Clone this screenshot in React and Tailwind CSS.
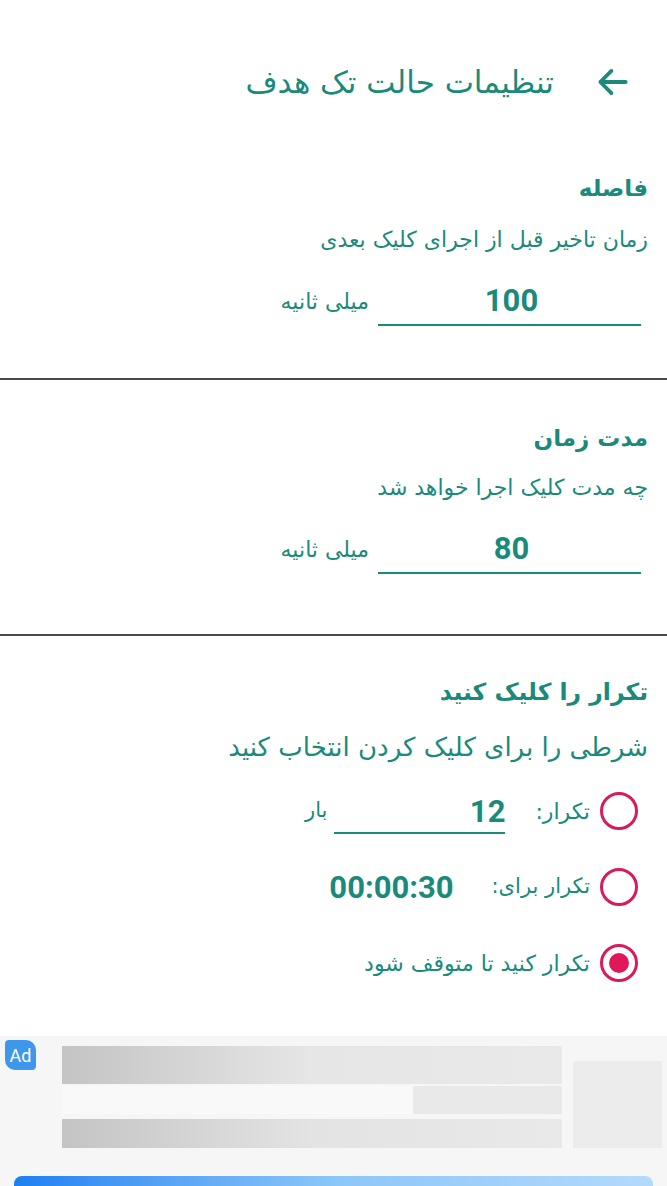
import React from "react";

const fa = { fontFamily: '"DejaVu Sans", "Noto Sans", sans-serif' };
const num = { fontFamily: 'Roboto, "Liberation Sans", sans-serif' };

function Radio({ checked }) {
  return (
    <span className="flex h-[38px] w-[38px] shrink-0 items-center justify-center rounded-full border-[3px] border-[#d81b5a]">
      {checked && <span className="h-[20px] w-[20px] rounded-full bg-[#e0185a]" />}
    </span>
  );
}

function MsField({ value, boxClass }) {
  return (
    <div className={`flex items-center ${boxClass}`}>
      <div className="mr-[26px] flex h-[50px] w-[263px] items-center justify-center border-b-2 border-[#1a8a7b]">
        <span style={num} className="pl-[4px] text-[31px] font-bold leading-none text-[#1a8a7b]">{value}</span>
      </div>
      <span style={fa} className="mr-[9px] text-[22px] text-[#1a8a7b]">میلی ثانیه</span>
    </div>
  );
}

export default function App() {
  return (
    <div dir="rtl" style={fa} className="flex min-h-[1186px] w-full flex-col overflow-hidden bg-white text-[#1a8a7b]">
      {/* header */}
      <div className="mt-[60px] flex h-[44px] items-center pr-[35px]">
        <svg width="38" height="38" viewBox="0 0 24 24" fill="none" stroke="#1a8a7b" strokeWidth="2.4" strokeLinecap="round" strokeLinejoin="round">
          <path d="M20 12H4.5" />
          <path d="M11 5l-7 7 7 7" />
        </svg>
        <h1 className="mr-[40px] text-[31px] font-normal leading-none">تنظیمات حالت تک هدف</h1>
      </div>

      {/* interval */}
      <div className="pr-[19px]">
        <h2 className="mt-[64px] h-[40px] text-[23px] font-bold leading-[40px]">فاصله</h2>
        <p className="mt-[14px] h-[36px] text-[22px] leading-[36px]">زمان تاخیر قبل از اجرای کلیک بعدی</p>
      </div>
      <MsField value="100" boxClass="mt-[18px]" />
      <div className="mt-[52px] h-[2px] w-full bg-[#4a4a4a]" />

      {/* duration */}
      <div className="pr-[19px]">
        <h2 className="mt-[38px] h-[40px] text-[23px] font-bold leading-[40px]">مدت زمان</h2>
        <p className="mt-[12px] h-[36px] text-[22px] leading-[36px]">چه مدت کلیک اجرا خواهد شد</p>
      </div>
      <MsField value="80" boxClass="mt-[18px]" />
      <div className="mt-[60px] h-[2px] w-full bg-[#4a4a4a]" />

      {/* repeat */}
      <div className="pr-[19px]">
        <h2 className="mt-[36px] h-[40px] text-[23.5px] font-bold leading-[40px]">تکرار را کلیک کنید</h2>
        <p className="mt-[15px] h-[40px] text-[26px] leading-[40px]">شرطی را برای کلیک کردن انتخاب کنید</p>
      </div>

      <div className="mt-[19px] flex flex-col gap-[26px] pr-[29px]">
        <div className="flex h-[50px] items-center">
          <Radio />
          <span className="mr-[10px] text-[22px]">تکرار:</span>
          <div className="mr-[30px] flex h-[46px] w-[171px] items-center border-b-2 border-[#1a8a7b] pt-[2px]">
            <span style={num} className="text-[31px] font-bold leading-none">12</span>
          </div>
          <span className="mr-[7px] text-[21px]">بار</span>
        </div>
        <div className="flex h-[50px] items-center">
          <Radio />
          <span className="mr-[10px] text-[21px]">تکرار برای:</span>
          <span style={num} className="mr-[38px] text-[31px] font-bold leading-none">00:00:30</span>
        </div>
        <div className="flex h-[50px] items-center">
          <Radio checked />
          <span className="mr-[10px] text-[22px]">تکرار کنید تا متوقف شود</span>
        </div>
      </div>

      {/* ad banner */}
      <div dir="ltr" className="relative mt-[48px] flex h-[150px] flex-col bg-[#f6f6f6]">
        <span style={num} className="absolute left-[5px] top-[4px] flex h-[30px] w-[31px] items-center justify-center rounded-tr-[10px] rounded-bl-[10px] rounded-tl-[4px] rounded-br-[4px] bg-[#3f97ec] text-[18px] text-white">Ad</span>
        <div className="mt-[10px] flex pl-[62px]">
          <div className="flex w-[500px] flex-col">
            <div className="h-[38px] bg-gradient-to-r from-[#c4c4c4] via-[#e6e6e6] to-[#e9e9e9]" />
            <div className="mt-[2px] flex h-[28px]">
              <div className="w-[351px] bg-[#f9f9f9]" />
              <div className="flex-1 bg-[#e9e9e9]" />
            </div>
            <div className="mt-[5px] h-[29px] bg-gradient-to-r from-[#c4c4c4] via-[#e3e3e3] to-[#e9e9e9]" />
          </div>
          <div className="ml-[11px] mt-[15px] h-[87px] w-[89px] bg-[#ececec]" />
        </div>
        <div className="mx-[14px] mt-auto h-[10px] rounded-t-[8px] bg-gradient-to-r from-[#1a80f0] via-[#8cc6f8] to-[#b3dafb]" />
      </div>
    </div>
  );
}
